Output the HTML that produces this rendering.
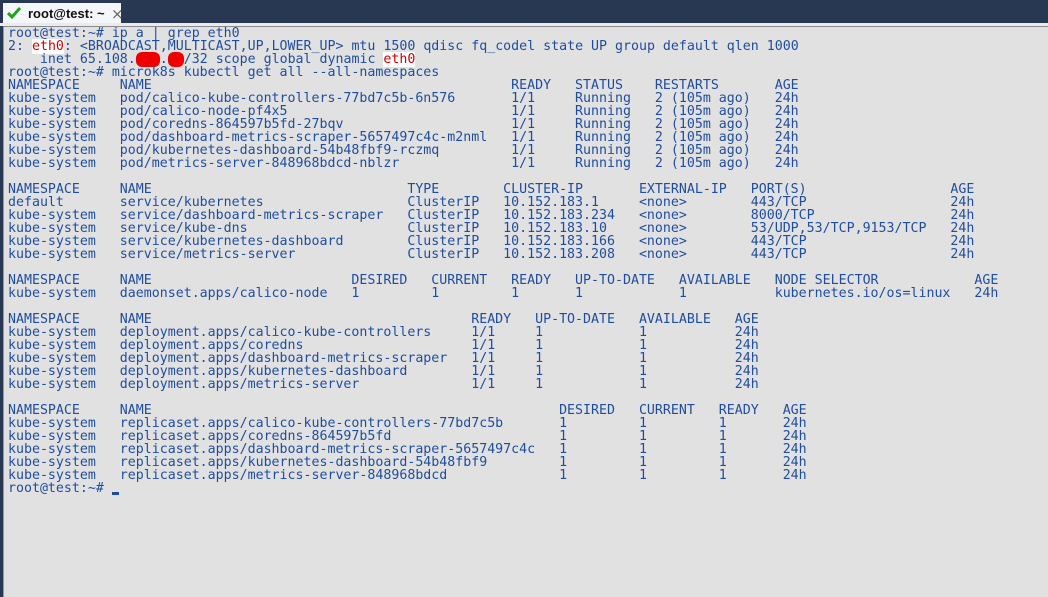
<!DOCTYPE html>
<html><head><meta charset="utf-8"><style>
html,body{margin:0;padding:0;width:1048px;height:597px;overflow:hidden;background:#283752;}
.tab{position:absolute;left:3px;top:3px;width:118px;height:21px;background:#f4f6f9;}
.tab .t{position:absolute;left:25px;top:3px;font:bold 13px "Liberation Sans",sans-serif;color:#111;}
.tab .x{position:absolute;left:108px;top:2px;font:15px "DejaVu Sans",sans-serif;color:#666;}
.strip{position:absolute;left:0;top:23px;width:1048px;height:3px;background:#e9ebee;}
.term{position:absolute;left:3px;top:26px;width:1045px;height:571px;background:#e1e1e1;border-left:1px solid #9a9a9a;border-top:1px solid #8a8a8a;box-sizing:border-box;}
pre{position:absolute;left:8px;top:27px;margin:0;font-family:"DejaVu Sans Mono",monospace;font-size:13.28px;line-height:13px;color:#1f4d9e;}
.r{color:#d40000;background:#fff;}
.b{color:transparent;background:#e00;border-radius:6px;}
.cur{display:inline-block;width:7px;height:3px;background:#1f4d9e;vertical-align:-3px;}
</style></head><body>
<div class="tab"><svg style="position:absolute;left:4px;top:4px" width="14" height="12" viewBox="0 0 14 12"><path d="M1 6 L5 10 L13 1" stroke="#1aa51a" stroke-width="3" fill="none"/></svg><span class="t">root@test: ~</span><span class="x">×</span></div>
<div class="strip"></div>
<div class="term"></div>
<pre>root@test:~# ip a | grep eth0
2: <span class="r">eth0</span>: &lt;BROADCAST,MULTICAST,UP,LOWER_UP&gt; mtu 1500 qdisc fq_codel state UP group default qlen 1000
    inet 65.108.<span class="b">xxx</span>.<span class="b">xx</span>/32 scope global dynamic <span class="r">eth0</span>
root@test:~# microk8s kubectl get all --all-namespaces
NAMESPACE     NAME                                             READY   STATUS    RESTARTS       AGE
kube-system   pod/calico-kube-controllers-77bd7c5b-6n576       1/1     Running   2 (105m ago)   24h
kube-system   pod/calico-node-pf4x5                            1/1     Running   2 (105m ago)   24h
kube-system   pod/coredns-864597b5fd-27bqv                     1/1     Running   2 (105m ago)   24h
kube-system   pod/dashboard-metrics-scraper-5657497c4c-m2nml   1/1     Running   2 (105m ago)   24h
kube-system   pod/kubernetes-dashboard-54b48fbf9-rczmq         1/1     Running   2 (105m ago)   24h
kube-system   pod/metrics-server-848968bdcd-nblzr              1/1     Running   2 (105m ago)   24h

NAMESPACE     NAME                                TYPE        CLUSTER-IP       EXTERNAL-IP   PORT(S)                  AGE
default       service/kubernetes                  ClusterIP   10.152.183.1     &lt;none&gt;        443/TCP                  24h
kube-system   service/dashboard-metrics-scraper   ClusterIP   10.152.183.234   &lt;none&gt;        8000/TCP                 24h
kube-system   service/kube-dns                    ClusterIP   10.152.183.10    &lt;none&gt;        53/UDP,53/TCP,9153/TCP   24h
kube-system   service/kubernetes-dashboard        ClusterIP   10.152.183.166   &lt;none&gt;        443/TCP                  24h
kube-system   service/metrics-server              ClusterIP   10.152.183.208   &lt;none&gt;        443/TCP                  24h

NAMESPACE     NAME                         DESIRED   CURRENT   READY   UP-TO-DATE   AVAILABLE   NODE SELECTOR            AGE
kube-system   daemonset.apps/calico-node   1         1         1       1            1           kubernetes.io/os=linux   24h

NAMESPACE     NAME                                        READY   UP-TO-DATE   AVAILABLE   AGE
kube-system   deployment.apps/calico-kube-controllers     1/1     1            1           24h
kube-system   deployment.apps/coredns                     1/1     1            1           24h
kube-system   deployment.apps/dashboard-metrics-scraper   1/1     1            1           24h
kube-system   deployment.apps/kubernetes-dashboard        1/1     1            1           24h
kube-system   deployment.apps/metrics-server              1/1     1            1           24h

NAMESPACE     NAME                                                   DESIRED   CURRENT   READY   AGE
kube-system   replicaset.apps/calico-kube-controllers-77bd7c5b       1         1         1       24h
kube-system   replicaset.apps/coredns-864597b5fd                     1         1         1       24h
kube-system   replicaset.apps/dashboard-metrics-scraper-5657497c4c   1         1         1       24h
kube-system   replicaset.apps/kubernetes-dashboard-54b48fbf9         1         1         1       24h
kube-system   replicaset.apps/metrics-server-848968bdcd              1         1         1       24h
root@test:~# <span class="cur"></span></pre>
</body></html>
